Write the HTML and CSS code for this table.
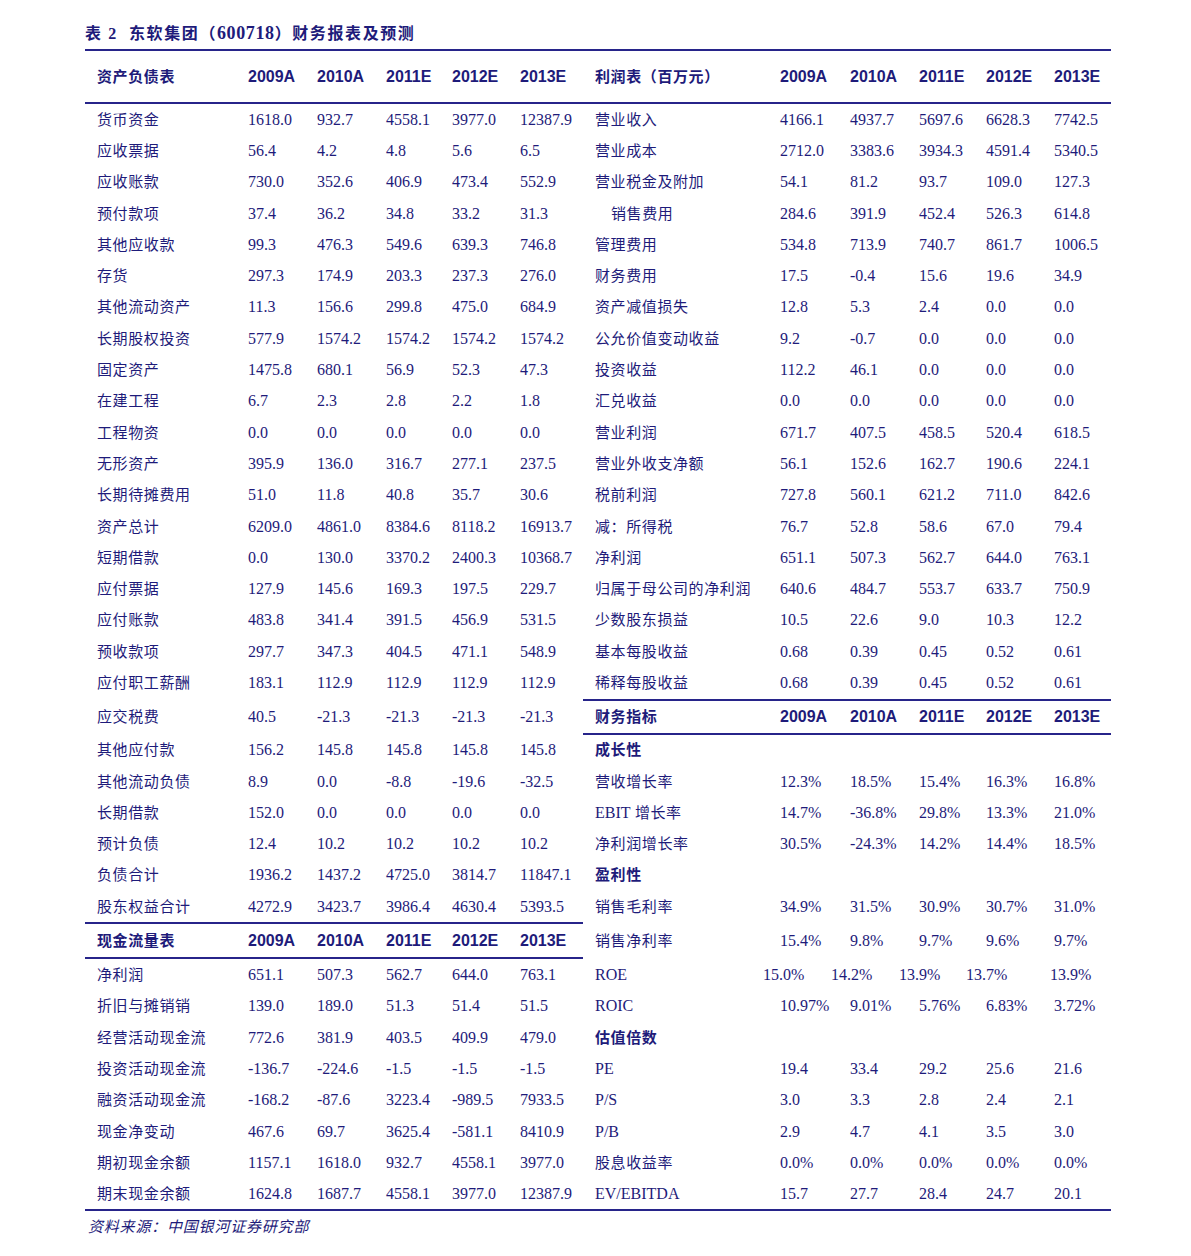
FILE: index.html
```html
<!DOCTYPE html>
<html lang="zh-CN">
<head>
<meta charset="utf-8">
<title>东软集团财务报表及预测</title>
<link rel="stylesheet" href="styles.css">
</head>
<body>
<div class="page">
  <div class="title">表 2&nbsp; 东软集团（<span class="code">600718</span>）财务报表及预测</div>
  <table class="fin">
    <colgroup>
      <col class="c-lab"><col class="c1"><col class="c2"><col class="c3"><col class="c4"><col class="c5">
      <col class="c-lab2"><col class="c7"><col class="c8"><col class="c9"><col class="c10"><col class="c11">
    </colgroup>
    <tbody>
      <tr class="hrow">
        <td class="lab hl">资产负债表</td><td class="yr">2009A</td><td class="yr">2010A</td><td class="yr">2011E</td><td class="yr">2012E</td><td class="yr">2013E</td>
        <td class="lab hl">利润表（百万元）</td><td class="yr">2009A</td><td class="yr">2010A</td><td class="yr">2011E</td><td class="yr">2012E</td><td class="yr">2013E</td>
      </tr>
      <tr><td class="lab">货币资金</td><td>1618.0</td><td>932.7</td><td>4558.1</td><td>3977.0</td><td>12387.9</td><td class="lab">营业收入</td><td>4166.1</td><td>4937.7</td><td>5697.6</td><td>6628.3</td><td>7742.5</td></tr>
      <tr><td class="lab">应收票据</td><td>56.4</td><td>4.2</td><td>4.8</td><td>5.6</td><td>6.5</td><td class="lab">营业成本</td><td>2712.0</td><td>3383.6</td><td>3934.3</td><td>4591.4</td><td>5340.5</td></tr>
      <tr><td class="lab">应收账款</td><td>730.0</td><td>352.6</td><td>406.9</td><td>473.4</td><td>552.9</td><td class="lab">营业税金及附加</td><td>54.1</td><td>81.2</td><td>93.7</td><td>109.0</td><td>127.3</td></tr>
      <tr><td class="lab">预付款项</td><td>37.4</td><td>36.2</td><td>34.8</td><td>33.2</td><td>31.3</td><td class="lab ind">销售费用</td><td>284.6</td><td>391.9</td><td>452.4</td><td>526.3</td><td>614.8</td></tr>
      <tr><td class="lab">其他应收款</td><td>99.3</td><td>476.3</td><td>549.6</td><td>639.3</td><td>746.8</td><td class="lab">管理费用</td><td>534.8</td><td>713.9</td><td>740.7</td><td>861.7</td><td>1006.5</td></tr>
      <tr><td class="lab">存货</td><td>297.3</td><td>174.9</td><td>203.3</td><td>237.3</td><td>276.0</td><td class="lab">财务费用</td><td>17.5</td><td>-0.4</td><td>15.6</td><td>19.6</td><td>34.9</td></tr>
      <tr><td class="lab">其他流动资产</td><td>11.3</td><td>156.6</td><td>299.8</td><td>475.0</td><td>684.9</td><td class="lab">资产减值损失</td><td>12.8</td><td>5.3</td><td>2.4</td><td>0.0</td><td>0.0</td></tr>
      <tr><td class="lab">长期股权投资</td><td>577.9</td><td>1574.2</td><td>1574.2</td><td>1574.2</td><td>1574.2</td><td class="lab">公允价值变动收益</td><td>9.2</td><td>-0.7</td><td>0.0</td><td>0.0</td><td>0.0</td></tr>
      <tr><td class="lab">固定资产</td><td>1475.8</td><td>680.1</td><td>56.9</td><td>52.3</td><td>47.3</td><td class="lab">投资收益</td><td>112.2</td><td>46.1</td><td>0.0</td><td>0.0</td><td>0.0</td></tr>
      <tr><td class="lab">在建工程</td><td>6.7</td><td>2.3</td><td>2.8</td><td>2.2</td><td>1.8</td><td class="lab">汇兑收益</td><td>0.0</td><td>0.0</td><td>0.0</td><td>0.0</td><td>0.0</td></tr>
      <tr><td class="lab">工程物资</td><td>0.0</td><td>0.0</td><td>0.0</td><td>0.0</td><td>0.0</td><td class="lab">营业利润</td><td>671.7</td><td>407.5</td><td>458.5</td><td>520.4</td><td>618.5</td></tr>
      <tr><td class="lab">无形资产</td><td>395.9</td><td>136.0</td><td>316.7</td><td>277.1</td><td>237.5</td><td class="lab">营业外收支净额</td><td>56.1</td><td>152.6</td><td>162.7</td><td>190.6</td><td>224.1</td></tr>
      <tr><td class="lab">长期待摊费用</td><td>51.0</td><td>11.8</td><td>40.8</td><td>35.7</td><td>30.6</td><td class="lab">税前利润</td><td>727.8</td><td>560.1</td><td>621.2</td><td>711.0</td><td>842.6</td></tr>
      <tr><td class="lab">资产总计</td><td>6209.0</td><td>4861.0</td><td>8384.6</td><td>8118.2</td><td>16913.7</td><td class="lab">减：所得税</td><td>76.7</td><td>52.8</td><td>58.6</td><td>67.0</td><td>79.4</td></tr>
      <tr><td class="lab">短期借款</td><td>0.0</td><td>130.0</td><td>3370.2</td><td>2400.3</td><td>10368.7</td><td class="lab">净利润</td><td>651.1</td><td>507.3</td><td>562.7</td><td>644.0</td><td>763.1</td></tr>
      <tr><td class="lab">应付票据</td><td>127.9</td><td>145.6</td><td>169.3</td><td>197.5</td><td>229.7</td><td class="lab">归属于母公司的净利润</td><td>640.6</td><td>484.7</td><td>553.7</td><td>633.7</td><td>750.9</td></tr>
      <tr><td class="lab">应付账款</td><td>483.8</td><td>341.4</td><td>391.5</td><td>456.9</td><td>531.5</td><td class="lab">少数股东损益</td><td>10.5</td><td>22.6</td><td>9.0</td><td>10.3</td><td>12.2</td></tr>
      <tr><td class="lab">预收款项</td><td>297.7</td><td>347.3</td><td>404.5</td><td>471.1</td><td>548.9</td><td class="lab">基本每股收益</td><td>0.68</td><td>0.39</td><td>0.45</td><td>0.52</td><td>0.61</td></tr>
      <tr><td class="lab">应付职工薪酬</td><td>183.1</td><td>112.9</td><td>112.9</td><td>112.9</td><td>112.9</td><td class="lab">稀释每股收益</td><td>0.68</td><td>0.39</td><td>0.45</td><td>0.52</td><td>0.61</td></tr>
      <tr class="mid-a">
        <td class="lab">应交税费</td><td>40.5</td><td>-21.3</td><td>-21.3</td><td>-21.3</td><td>-21.3</td>
        <td class="lab hl ln">财务指标</td><td class="yr ln">2009A</td><td class="yr ln">2010A</td><td class="yr ln">2011E</td><td class="yr ln">2012E</td><td class="yr ln">2013E</td>
      </tr>
      <tr><td class="lab">其他应付款</td><td>156.2</td><td>145.8</td><td>145.8</td><td>145.8</td><td>145.8</td><td class="lab hl">成长性</td><td></td><td></td><td></td><td></td><td></td></tr>
      <tr><td class="lab">其他流动负债</td><td>8.9</td><td>0.0</td><td>-8.8</td><td>-19.6</td><td>-32.5</td><td class="lab">营收增长率</td><td>12.3%</td><td>18.5%</td><td>15.4%</td><td>16.3%</td><td>16.8%</td></tr>
      <tr><td class="lab">长期借款</td><td>152.0</td><td>0.0</td><td>0.0</td><td>0.0</td><td>0.0</td><td class="lab"><span class="lat">EBIT</span> 增长率</td><td>14.7%</td><td>-36.8%</td><td>29.8%</td><td>13.3%</td><td>21.0%</td></tr>
      <tr><td class="lab">预计负债</td><td>12.4</td><td>10.2</td><td>10.2</td><td>10.2</td><td>10.2</td><td class="lab">净利润增长率</td><td>30.5%</td><td>-24.3%</td><td>14.2%</td><td>14.4%</td><td>18.5%</td></tr>
      <tr><td class="lab">负债合计</td><td>1936.2</td><td>1437.2</td><td>4725.0</td><td>3814.7</td><td>11847.1</td><td class="lab hl">盈利性</td><td></td><td></td><td></td><td></td><td></td></tr>
      <tr><td class="lab">股东权益合计</td><td>4272.9</td><td>3423.7</td><td>3986.4</td><td>4630.4</td><td>5393.5</td><td class="lab">销售毛利率</td><td>34.9%</td><td>31.5%</td><td>30.9%</td><td>30.7%</td><td>31.0%</td></tr>
      <tr class="mid-b">
        <td class="lab hl ln">现金流量表</td><td class="yr ln">2009A</td><td class="yr ln">2010A</td><td class="yr ln">2011E</td><td class="yr ln">2012E</td><td class="yr ln">2013E</td>
        <td class="lab">销售净利率</td><td>15.4%</td><td>9.8%</td><td>9.7%</td><td>9.6%</td><td>9.7%</td>
      </tr>
      <tr class="roe"><td class="lab">净利润</td><td>651.1</td><td>507.3</td><td>562.7</td><td>644.0</td><td>763.1</td><td class="lab"><span class="lat">ROE</span></td><td class="s1">15.0%</td><td class="s2">14.2%</td><td class="s3">13.9%</td><td class="s4">13.7%</td><td class="s5">13.9%</td></tr>
      <tr><td class="lab">折旧与摊销销</td><td>139.0</td><td>189.0</td><td>51.3</td><td>51.4</td><td>51.5</td><td class="lab"><span class="lat">ROIC</span></td><td>10.97%</td><td>9.01%</td><td>5.76%</td><td>6.83%</td><td>3.72%</td></tr>
      <tr><td class="lab">经营活动现金流</td><td>772.6</td><td>381.9</td><td>403.5</td><td>409.9</td><td>479.0</td><td class="lab hl">估值倍数</td><td></td><td></td><td></td><td></td><td></td></tr>
      <tr><td class="lab">投资活动现金流</td><td>-136.7</td><td>-224.6</td><td>-1.5</td><td>-1.5</td><td>-1.5</td><td class="lab"><span class="lat">PE</span></td><td>19.4</td><td>33.4</td><td>29.2</td><td>25.6</td><td>21.6</td></tr>
      <tr><td class="lab">融资活动现金流</td><td>-168.2</td><td>-87.6</td><td>3223.4</td><td>-989.5</td><td>7933.5</td><td class="lab"><span class="lat">P/S</span></td><td>3.0</td><td>3.3</td><td>2.8</td><td>2.4</td><td>2.1</td></tr>
      <tr><td class="lab">现金净变动</td><td>467.6</td><td>69.7</td><td>3625.4</td><td>-581.1</td><td>8410.9</td><td class="lab"><span class="lat">P/B</span></td><td>2.9</td><td>4.7</td><td>4.1</td><td>3.5</td><td>3.0</td></tr>
      <tr><td class="lab">期初现金余额</td><td>1157.1</td><td>1618.0</td><td>932.7</td><td>4558.1</td><td>3977.0</td><td class="lab">股息收益率</td><td>0.0%</td><td>0.0%</td><td>0.0%</td><td>0.0%</td><td>0.0%</td></tr>
      <tr class="last"><td class="lab">期末现金余额</td><td>1624.8</td><td>1687.7</td><td>4558.1</td><td>3977.0</td><td>12387.9</td><td class="lab"><span class="lat">EV/EBITDA</span></td><td>15.7</td><td>27.7</td><td>28.4</td><td>24.7</td><td>20.1</td></tr>
    </tbody>
  </table>
  <div class="source">资料来源：中国银河证券研究部</div>
</div>
</body>
</html>
```

FILE: styles.css
```css
html, body {
  margin: 0;
  background: #ffffff;
}

body {
  color: #1e1b7a;
  font-family: "Liberation Serif", "Noto Sans CJK SC", serif;
}

.page {
  width: 1026px;
  padding: 23px 0 0 85px;
}

.title {
  font-family: "Liberation Serif", "Noto Sans CJK SC", serif;
  font-weight: bold;
  font-size: 16px;
  line-height: 20px;
  height: 20px;
  letter-spacing: 1.6px;
  white-space: nowrap;
  margin-bottom: 6px;
}

.title .code {
  font-size: 18px;
  letter-spacing: 0.6px;
}

.fin {
  width: 1026px;
  table-layout: fixed;
  border-collapse: separate;
  border-spacing: 0;
}

.c-lab { width: 163px; }
.c1 { width: 69px; }
.c2 { width: 69px; }
.c3 { width: 66px; }
.c4 { width: 68px; }
.c5 { width: 63px; }
.c-lab2 { width: 197px; }
.c7 { width: 70px; }
.c8 { width: 69px; }
.c9 { width: 67px; }
.c10 { width: 68px; }
.c11 { width: 57px; }

.fin tr {
  height: 31.3px;
}

.fin td {
  padding: 0;
  vertical-align: middle;
  white-space: nowrap;
  overflow: visible;
  font-family: "Liberation Serif", serif;
  font-size: 16px;
  line-height: 18px;
  text-align: left;
}

.fin td.lab {
  padding-left: 12px;
  font-family: "Liberation Serif", "Noto Sans CJK SC", serif;
  font-size: 15px;
  letter-spacing: 0.6px;
}

.fin td.lab .lat {
  font-family: "Liberation Serif", serif;
  font-size: 16px;
  letter-spacing: 0;
}

.fin td.ind {
  padding-left: 28px;
}

.fin td.hl {
  font-weight: bold;
}

.fin td.yr {
  font-family: "Liberation Sans", sans-serif;
  font-weight: bold;
  font-size: 16px;
}

.fin tr.hrow {
  height: 55px;
}

.fin tr.hrow td {
  border-top: 2px solid #27248a;
  border-bottom: 2px solid #27248a;
}

.fin tr.mid-a {
  height: 36px;
}

.fin tr.mid-b {
  height: 37px;
}

.fin td.ln {
  border-top: 2px solid #27248a;
  border-bottom: 2px solid #27248a;
}

.fin tr.last {
  height: 32.5px;
}

.fin tr.last td {
  border-bottom: 2px solid #27248a;
}

.fin tr.roe td.s1 { text-indent: -17px; }
.fin tr.roe td.s2 { text-indent: -19px; }
.fin tr.roe td.s3 { text-indent: -20px; }
.fin tr.roe td.s4 { text-indent: -20px; }
.fin tr.roe td.s5 { text-indent: -4px; }

.source {
  margin-top: 5px;
  padding-left: 3px;
  font-family: "Noto Sans CJK SC", sans-serif;
  font-style: italic;
  font-size: 15px;
  line-height: 20px;
  letter-spacing: 0.8px;
}
```
